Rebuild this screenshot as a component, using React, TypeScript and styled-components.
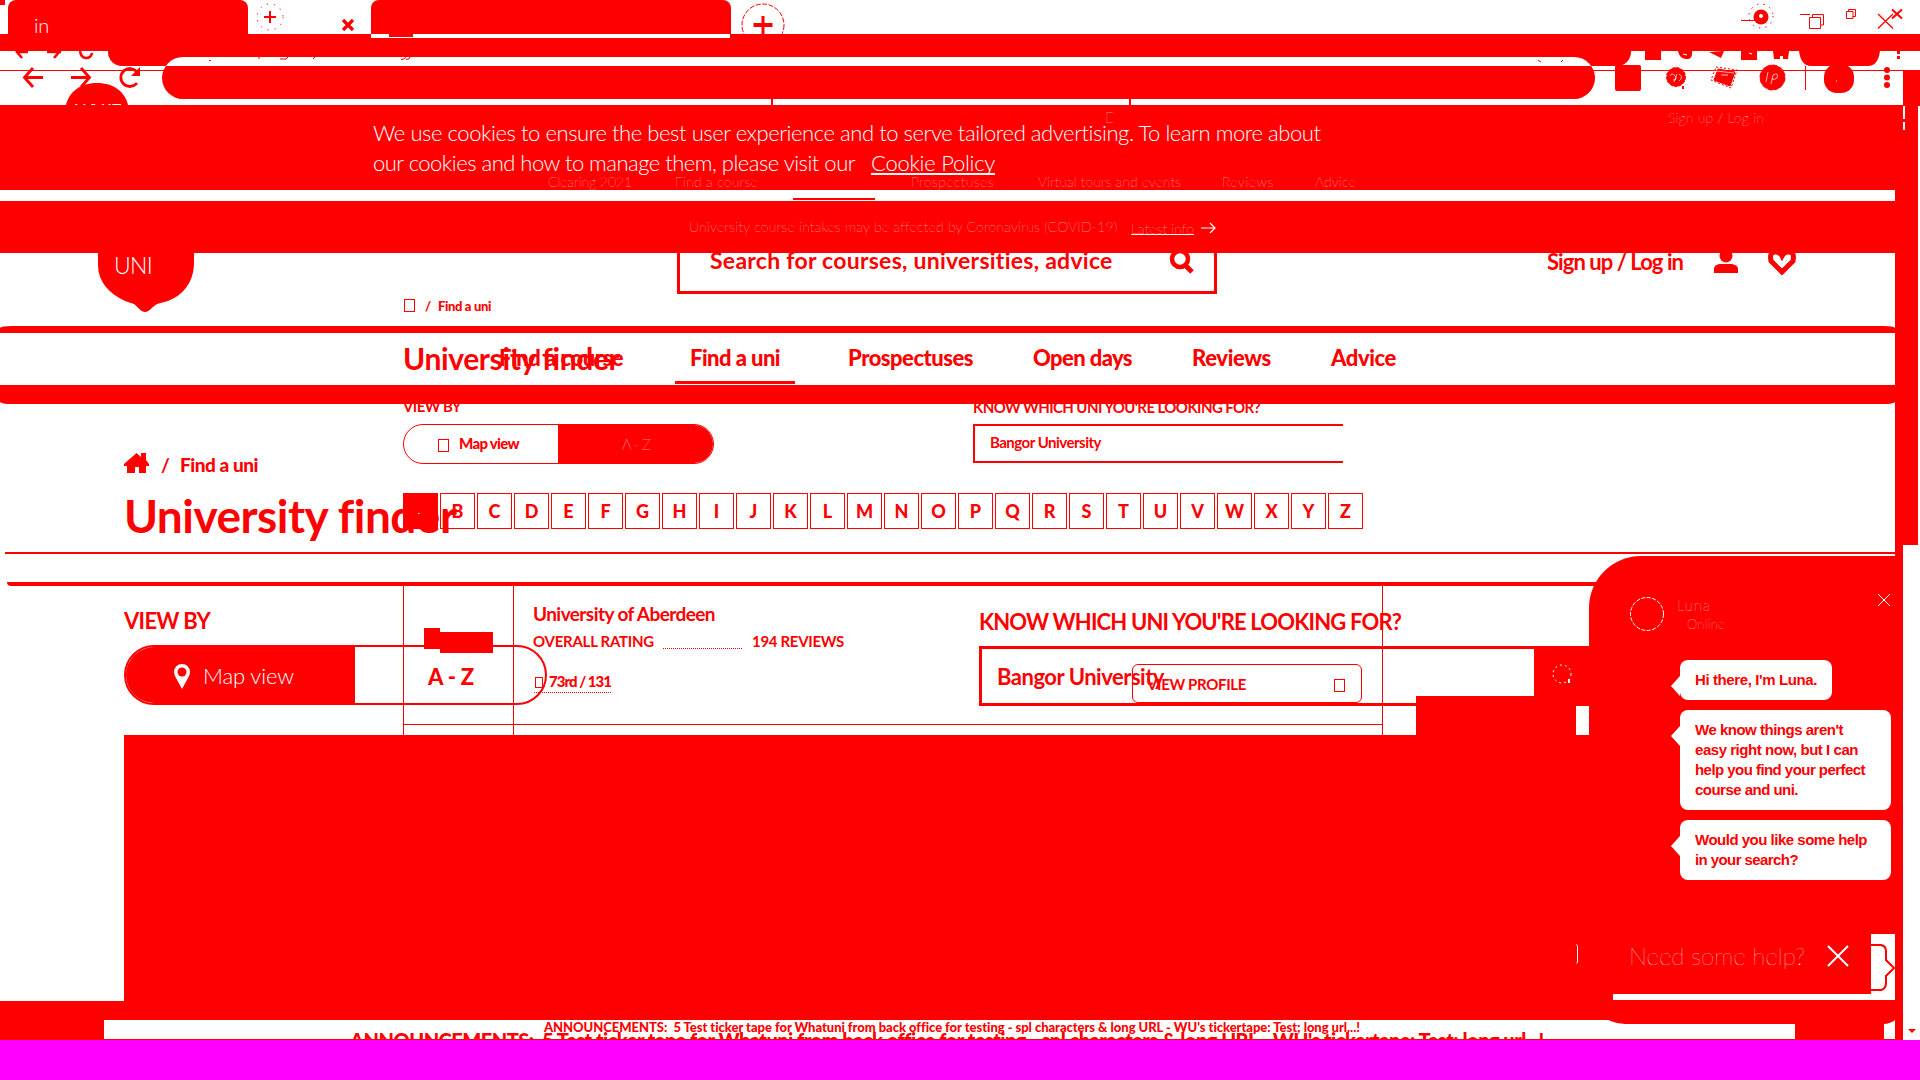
import React, { useLayoutEffect, useRef, useState } from 'react';
import styled, { createGlobalStyle, css } from 'styled-components';

const RED = '#ff0000';
const PAPER = '#ffffff';

const GlobalStyle = createGlobalStyle`
  * { box-sizing: border-box; }
  body { margin: 0; background: ${PAPER}; font-family: Lato, "Liberation Sans", sans-serif; }
`;

const Screen = styled.div`
  position: relative;
  display: flex;
  flex-direction: column;
  width: 1920px;
  height: 1080px;
  overflow: hidden;
  color: ${RED};
  background: ${PAPER};
`;

const Band = styled.section<{ $h: number; $fill?: boolean }>`
  position: relative;
  flex: none;
  height: ${p => p.$h}px;
  overflow: hidden;
  background: ${p => (p.$fill ? RED : PAPER)};
`;

/* A second sheet of content lying over the band it belongs to. */
const Sheet = styled.div`
  position: absolute;
  inset: 0;
`;

const Row = styled.div<{ $h?: number; $left?: number; $top?: number }>`
  display: flex;
  align-items: flex-start;
  height: ${p => (p.$h ? `${p.$h}px` : 'auto')};
  padding-left: ${p => p.$left ?? 0}px;
  padding-top: ${p => p.$top ?? 0}px;
`;

const Label = styled.span<{ $w: number; $size: number; $weight?: number; $pale?: boolean; $gap?: number; $drop?: number; $sans?: boolean }>`
  flex: none;
  width: ${p => p.$w}px;
  margin-left: ${p => p.$gap ?? 0}px;
  margin-top: ${p => p.$drop ?? 0}px;
  font-family: ${p => (p.$sans ? '"Liberation Sans", Arial, sans-serif' : 'Lato, "Liberation Sans", sans-serif')};
  font-size: ${p => p.$size}px;
  font-weight: ${p => p.$weight ?? 700};
  line-height: 1;
  white-space: pre;
  color: ${p => (p.$pale ? PAPER : RED)};
`;

type FitProps = { text: string; w: number; size: number; weight?: number; pale?: boolean; gap?: number; drop?: number; sans?: boolean };

/* Tracks its letters in or out so that the text fills the given width. */
function Fit({ text, w, size, weight, pale, gap, drop, sans }: FitProps) {
  const ref = useRef<HTMLSpanElement>(null);
  const [track, setTrack] = useState(0);
  useLayoutEffect(() => {
    if (ref.current) setTrack((w - ref.current.getBoundingClientRect().width) / text.length);
  }, [text, w]);
  return (
    <Label $w={w} $size={size} $weight={weight} $pale={pale} $gap={gap} $drop={drop} $sans={sans}>
      <span ref={ref} style={{ letterSpacing: track }}>{text}</span>
    </Label>
  );
}

const Block = styled.div<{ $w: number; $h: number; $gap?: number; $drop?: number; $paper?: boolean }>`
  flex: none;
  width: ${p => p.$w}px;
  height: ${p => p.$h}px;
  margin-left: ${p => p.$gap ?? 0}px;
  margin-top: ${p => p.$drop ?? 0}px;
  background: ${p => (p.$paper ? PAPER : RED)};
`;

const MissingGlyph = styled.i<{ $w?: number; $h?: number; $gap?: number; $drop?: number }>`
  flex: none;
  width: ${p => p.$w ?? 11}px;
  height: ${p => p.$h ?? 13}px;
  margin-left: ${p => p.$gap ?? 0}px;
  margin-top: ${p => p.$drop ?? 0}px;
  border: 1px solid ${RED};
`;

const Art = styled.svg<{ $gap?: number; $drop?: number }>`
  flex: none;
  display: block;
  margin-left: ${p => p.$gap ?? 0}px;
  margin-top: ${p => p.$drop ?? 0}px;
  fill: none;
  stroke: ${RED};
  overflow: visible;
`;

/* ---------- browser chrome ---------- */

const Tab = styled.div<{ $w: number; $gap: number }>`
  flex: none;
  width: ${p => p.$w}px;
  height: 34px;
  margin-left: ${p => p.$gap}px;
  padding: 15px 0 0 26px;
  background: ${RED};
  border-radius: 8px 8px 0 0;
`;

function TabStrip() {
  return (
    <Band $h={34}>
      <Row>
        <Block $w={5} $h={5} />
        <Tab $w={240} $gap={3}><Fit text="in" w={15} size={20} weight={300} pale /></Tab>
        <Art width="30" height="30" viewBox="0 0 30 30" $gap={7} $drop={2}>
          <path d="M15 9v12M9 15h12" strokeWidth="2" />
          <circle cx="15" cy="15" r="13" strokeWidth="1" strokeDasharray="1.2 6" />
        </Art>
        <Art width="12" height="12" viewBox="0 0 12 12" $gap={57} $drop={19}>
          <path d="M1 1l10 10M11 1L1 11" strokeWidth="3.2" />
        </Art>
        <Tab $w={360} $gap={17} />
        <Art width="44" height="44" viewBox="0 0 44 44" $gap={10} $drop={3}>
          <circle cx="22" cy="22" r="21" strokeWidth="1" strokeDasharray="5 1.5" />
          <path d="M22 13v20" strokeWidth="3" />
          <path d="M12.500 22h19" strokeWidth="4" />
        </Art>
      </Row>
      <WindowButtons />
    </Band>
  );
}

const Corner = styled.div`
  position: absolute;
  right: 0;
  top: 0;
`;

function WindowButtons() {
  return (
    <Corner>
      <Art width="190" height="34" viewBox="1730 0 190 34">
        <path d="M1741 20.500h14" />
        <ellipse cx="1761" cy="17" rx="7.500" ry="7.500" fill={RED} stroke="none" />
        <circle cx="1761" cy="16" r="2" fill={PAPER} stroke="none" />
        <circle cx="1761" cy="16" r="12" strokeDasharray="1.500 5" />
        <path d="M1800 14.500h10M1812.500 17v-2.500h11v10.500h-3M1809.500 17.500h11v11h-11z" />
        <path d="M1848.500 11.500v-2h7v7h-3M1846.500 11.500h6.500v7h-6.500z" />
        <path d="M1878 14l15 14.500M1893 14l-15 14.500" strokeWidth="1.300" />
        <path d="M1892 9.500l10 9M1902 9.500l-10 9" strokeWidth="2" />
      </Art>
    </Corner>
  );
}

const UpperPill = styled.div`
  flex: none;
  width: 1523px;
  height: 15px;
  margin-left: 108px;
  background: ${RED};
  border-radius: 0 0 14px 14px;
`;

const LowerPill = styled.div`
  position: absolute;
  left: 162px;
  top: 23px;
  width: 1433px;
  height: 42px;
  border-radius: 21px;
  background: linear-gradient(${PAPER} 9px, ${RED} 9px);
`;

const TabFoot = styled.div`
  position: absolute;
  left: 371px;
  top: 0;
  width: 359px;
  height: 4px;
  padding-left: 18px;
  background: ${PAPER};
`;

function AddressBar() {
  return (
    <Band $h={71}>
      <Block $w={1920} $h={17} />
      <Row><UpperPill /></Row>
      <TabFoot><Block $w={24} $h={3} /></TabFoot>
      <Sheet>
        <Art width="1920" height="71" viewBox="0 34 1920 71">
          <path d="M0 70.500h1903" />
          <path d="M16 51l6 7M16 52h12M47 52h14M60 51l-6 7" strokeWidth="2.500" />
          <path d="M80 51q1 7 6 7t6-5" strokeWidth="2.500" />
          <path d="M33 68l-8.500 9.500L33 87M25 77.500h18M81 68l8.500 9.500L81 87M71 77.500h18" strokeWidth="2.800" />
          <path d="M137 72a9 9 0 1 0 0 11" strokeWidth="2.800" />
          <path d="M140 67v9h-9z" fill={RED} stroke="none" />
          <path d="M66 105c3-13 14-22 31-22s28 9 31 22z" fill={RED} stroke="none" />
          <path d="M772 99v6M1130 99v6" strokeWidth="2" />
          <path d="M1645 51h16v9h-16zM1741 51h16v9h-16z" fill={RED} stroke="none" />
          <path d="M1678 51q1 7 8 8t6-8zM1709 52l12 6 3-7zM1773 51h16l-1 8h-5v-3h-3v3h-6z" fill={RED} stroke="none" />
          <path d="M1683 54l4 1M1749 53l3 1" stroke={PAPER} />
          <path d="M1799 51h81q-2 15-12 15h-57q-10 0-12-15z" fill={RED} stroke="none" />
          <path d="M1898.500 51v3M1898.500 56v3" strokeWidth="3" />
          <rect x="1615" y="65" width="26" height="26" rx="2" fill={RED} stroke="none" />
          <circle cx="1676" cy="77" r="9.500" fill={RED} strokeDasharray="3 1.500" />
          <path d="M1683 86v3" strokeWidth="2" />
          <path d="M1670 76q2-4 5 0t-2 4M1679 74q5 3 0 7M1674 82l3-8" stroke={PAPER} strokeWidth="0.700" />
          <path d="M1718 69l17 3-5 14-16-6z" fill={RED} />
          <path d="M1716 67l21 3-6 18-20-8z" strokeDasharray="2 2" />
          <path d="M1716 71l18 2M1721 75h7" stroke={PAPER} strokeWidth="0.700" />
          <circle cx="1772.500" cy="77.500" r="12.500" fill={RED} strokeDasharray="5 1.500" />
          <path d="M1768 72l-2 10M1771 84l2-9q6-3 4 3-2 2-5 1" stroke={PAPER} strokeWidth="0.700" />
          <path d="M1805.500 66v24" />
          <rect x="1824" y="64" width="30" height="29" rx="13" fill={RED} stroke="none" />
          <path d="M1836 81h1" stroke={PAPER} />
          <circle cx="1887" cy="70" r="3" fill={RED} stroke="none" />
          <circle cx="1887" cy="77.500" r="3" fill={RED} stroke="none" />
          <circle cx="1887" cy="85" r="3" fill={RED} stroke="none" />
        </Art>
        <LowerPill />
        <UrlRemnant />
      </Sheet>
    </Band>
  );
}

const UrlClip = styled.div`
  position: absolute;
  left: 209px;
  top: 23px;
  width: 1360px;
  height: 7px;
`;

function UrlRemnant() {
  return (
    <UrlClip>
      <Art width="1360" height="5" viewBox="0 0 1360 5">
        <path d="M0 3.500h2M50 0v2M71 2h6l2-2M106 0l-2 2M192 2.500q4 0 5-2.500M197 2.500q4 0 4-2.500M1329 3l3 2M1352 5l2-2" strokeWidth="1" />
      </Art>
    </UrlClip>
  );
}

/* ---------- banners ---------- */

const CookieLink = styled.a`
  flex: none;
  margin: 0 0 0 16px;
  width: 124px;
  height: 23px;
  border-bottom: 2px solid ${PAPER};
`;

function CookieBand() {
  return (
    <Band $h={85} $fill>
      <Row $left={373} $top={17} $h={47}>
        <Fit text="We use cookies to ensure the best user experience and to serve tailored advertising. To learn more about" w={948} size={22} weight={300} pale />
      </Row>
      <Row $left={373}>
        <Fit text="our cookies and how to manage them, please visit our" w={482} size={22} weight={300} pale />
        <CookieLink><Fit text="Cookie Policy" w={124} size={22} weight={300} pale /></CookieLink>
      </Row>
      <Sheet>
        <Row $left={1105} $top={5} $h={70}>
          <Fit text="E" w={9} size={15} weight={100} pale />
          <Fit text="Sign up / Log in" w={96} size={14} weight={100} pale gap={554} drop={1} />
        </Row>
        <Row $left={548}>
          <Fit text="Clearing 2021" w={84} size={14} weight={100} pale />
          <Fit text="Find a course" w={83} size={14} weight={100} pale gap={43} />
          <Fit text="Prospectuses" w={83} size={14} weight={100} pale gap={153} />
          <Fit text="Virtual tours and events" w={143} size={14} weight={100} pale gap={44} />
          <Fit text="Reviews" w={52} size={14} weight={100} pale gap={41} />
          <Fit text="Advice" w={41} size={14} weight={100} pale gap={41} />
        </Row>
      </Sheet>
    </Band>
  );
}

const NoticeLink = styled.a`
  flex: none;
  width: 63px;
  height: 17px;
  margin-left: 14px;
  border-bottom: 1px solid ${PAPER};
`;

function NoticeBand() {
  return (
    <Band $h={52} $fill>
      <Row $left={689} $top={17}>
        <Fit text="University course intakes may be affected by Coronavirus (COVID-19)" w={428} size={14} weight={100} pale drop={2} />
        <NoticeLink><Fit text="Latest info" w={63} size={14} weight={100} pale /></NoticeLink>
        <Art width="15" height="12" viewBox="0 0 15 12" $gap={7} $drop={4}>
          <path d="M0 6h14M9 1l5 5-5 5" stroke={PAPER} strokeWidth="1.200" />
        </Art>
      </Row>
    </Band>
  );
}

/* ---------- site header ---------- */

const SearchFrame = styled.div`
  flex: none;
  display: flex;
  width: 540px;
  height: 41px;
  margin-left: 482px;
  padding-left: 30px;
  border: solid ${RED};
  border-width: 0 3px 3px;
`;

function SiteHeader() {
  return (
    <Band $h={73}>
      <Row $left={98} $h={60}>
        <Art width="97" height="59" viewBox="0 0 97 59">
          <path d="M0 0H96V12C95 30 85 42 70 48L59 51C54 54 51 59 47 59S41 55 36 51L27 48C10 40 0 28 0 12Z" fill={RED} stroke="none" />
        </Art>
        <SearchFrame>
          <Fit text="Search for courses, universities, advice" w={403} size={23} drop={-4} />
          <Art width="24" height="25" viewBox="0 0 24 25" $gap={57} $drop={-4}>
            <circle cx="10" cy="10" r="8" strokeWidth="4.500" />
            <path d="M16 17l6 6" strokeWidth="5" />
          </Art>
        </SearchFrame>
        <Fit text="Sign up / Log in" w={136} size={22} gap={330} drop={-2} />
        <Art width="26" height="24" viewBox="0 0 26 24" $gap={30} $drop={-4}>
          <circle cx="13" cy="7" r="6.500" fill={RED} stroke="none" />
          <path d="M1 24v-5q1-3 5-4h13q5 1 6 4v5z" fill={RED} stroke="none" />
        </Art>
        <Art width="28" height="26" viewBox="0 0 28 26" $gap={29} $drop={-4}>
          <path d="M14 23L3 12Q1 2 8 3q4 0 6 4 2-4 6-4 7-1 5 9z" strokeWidth="5" />
        </Art>
      </Row>
      <Sheet>
        <Row $left={114} $top={1} $h={46}>
          <Fit text="UNI" w={38} size={23} weight={300} pale />
        </Row>
        <Row $left={404}>
          <MissingGlyph />
          <Fit text="/" w={5} size={13} weight={900} gap={10} drop={1} />
          <Fit text="Find a uni" w={53} size={13} weight={900} gap={8} drop={1} />
        </Row>
      </Sheet>
    </Band>
  );
}

const NavItems: Array<[string, number, number]> = [
  ['Find a course', 124, 0],
  ['Find a uni', 90, 67],
  ['Prospectuses', 125, 68],
  ['Open days', 99, 60],
  ['Reviews', 79, 60],
  ['Advice', 65, 60],
];

function NavBand() {
  return (
    <Band $h={52}>
      <Row $left={499} $top={14} $h={48}>
        {NavItems.map(([text, w, gap]) => <Fit key={text} text={text} w={w} size={22} weight={900} gap={gap} />)}
      </Row>
      <Row $left={675}><Block $w={120} $h={3} /></Row>
      <Sheet>
        <Row $left={403} $top={10}><Fit text="University finder" w={216} size={30} /></Row>
      </Sheet>
    </Band>
  );
}

/* ---------- finder controls ---------- */

const Toggle = styled.div<{ $big?: boolean }>`
  flex: none;
  display: flex;
  overflow: hidden;
  width: ${p => (p.$big ? 423 : 311)}px;
  height: ${p => (p.$big ? 60 : 40)}px;
  border: ${p => (p.$big ? 2 : 1)}px solid ${RED};
  border-radius: 30px;
`;

const Half = styled.div<{ $w: number; $on?: boolean; $pad: number }>`
  flex: none;
  display: flex;
  width: ${p => p.$w}px;
  padding-left: ${p => p.$pad}px;
  background: ${p => (p.$on ? RED : 'transparent')};
`;

const Field = styled.div<{ $w: number; $h: number; $edge: number; $gap: number; $pad: number }>`
  flex: none;
  display: flex;
  width: ${p => p.$w}px;
  height: ${p => p.$h}px;
  margin-left: ${p => p.$gap}px;
  padding-left: ${p => p.$pad}px;
  border: ${p => p.$edge}px solid ${RED};
  border-right: 0;
`;

const Alphabet = styled.div`
  display: flex;
  gap: 2px;
  padding: 0 0 0 403px;
`;

const Letter = styled.span<{ $on?: boolean }>`
  flex: none;
  width: 35px;
  height: 36px;
  border: 1px solid ${RED};
  text-align: center;
  font: 900 18px/34px Lato, sans-serif;
  color: ${RED};
  ${p => p.$on && css`background: ${RED}; color: ${PAPER};`}
`;

const Dash = styled.i`
  display: inline-block;
  width: 5px;
  height: 1px;
  margin-bottom: 4px;
  background: ${PAPER};
`;

function FinderBand() {
  return (
    <Band $h={148}>
      <Row $left={403} $h={20}>
        <Fit text="VIEW BY" w={58} size={15} drop={-5} />
        <Fit text="KNOW WHICH UNI YOU'RE LOOKING FOR?" w={287} size={15} gap={512} drop={-4} />
      </Row>
      <Row $left={403} $h={69}>
        <Toggle>
          <Half $w={154} $pad={34}>
            <MissingGlyph $drop={14} />
            <Fit text="Map view" w={60} size={15} weight={900} gap={10} drop={11} />
          </Half>
          <Half $w={155} $on $pad={64}><Fit text="A - Z" w={28} size={15} weight={100} pale drop={12} /></Half>
        </Toggle>
        <Field $w={370} $h={39} $edge={2} $gap={259} $pad={15}>
          <Fit text="Bangor University" w={111} size={15} drop={9} />
        </Field>
      </Row>
      <Alphabet>
        {'ABCDEFGHIJKLMNOPQRSTUVWXYZ'.split('').map(c => <Letter key={c} $on={c === 'A'}>{c === 'A' ? <Dash /> : c}</Letter>)}
      </Alphabet>
      <Sheet>
        <Row $left={124} $top={49} $h={90}>
          <Art width="25" height="20" viewBox="0 0 25 20">
            <path d="M0 11L12.500 0 17 4V0h5v7l3 4v2h-3v7h-7v-6h-4v6H3v-7H0z" fill={RED} stroke="none" />
          </Art>
          <Fit text="/" w={8} size={19} gap={12} drop={2} />
          <Fit text="Find a uni" w={78} size={19} weight={900} gap={11} drop={2} />
        </Row>
      </Sheet>
      <Sheet>
        <Row $left={124} $top={89}><Fit text="University finder" w={332} size={46} /></Row>
      </Sheet>
    </Band>
  );
}

const Rule = styled.div<{ $h: number; $left?: number; $w?: number; $tuck?: string }>`
  flex: none;
  width: ${p => p.$w ?? 1895}px;
  height: ${p => p.$h}px;
  margin-left: ${p => p.$left ?? 0}px;
  background: ${RED};
  border-radius: ${p => p.$tuck ?? '0'};
`;

/* ---------- results ---------- */

const Frame = styled.div`
  display: grid;
  grid-template-columns: 110px 869px;
  width: 980px;
  height: 149px;
  margin-left: 403px;
  border-left: 1px solid ${RED};
  border-right: 1px solid ${RED};
`;

const FrameCell = styled.div`
  position: relative;
  height: 139px;
  border-bottom: 1px solid ${RED};
  &:first-child::after {
    content: '';
    position: absolute;
    right: 0;
    top: 0;
    width: 1px;
    height: 149px;
    background: ${RED};
  }
`;

const Dotted = styled.i<{ $w: number; $gap?: number; $drop?: number }>`
  flex: none;
  width: ${p => p.$w}px;
  height: 1px;
  margin-left: ${p => p.$gap ?? 0}px;
  margin-top: ${p => p.$drop ?? 0}px;
  background: repeating-linear-gradient(90deg, ${RED} 0 1px, transparent 1px 2px);
`;

const ProfileButton = styled.div`
  position: absolute;
  left: 618px;
  top: 78px;
  display: flex;
  width: 230px;
  height: 39px;
  padding: 14px 0 0 14px;
  border: 1px solid ${RED};
  border-radius: 6px;
`;

const SearchButton = styled.div`
  flex: none;
  width: 55px;
  height: 60px;
  padding: 18px 0 0 18px;
  background: ${RED};
`;

const BigToggle = styled(Toggle)`
  background: transparent;
`;

function ResultsBand() {
  return (
    <Band $h={149}>
      <Frame>
        <FrameCell>
          <Row $left={20} $top={42}>
            <Block $w={16} $h={21} />
            <Block $w={53} $h={21} $drop={4} />
          </Row>
        </FrameCell>
        <FrameCell>
          <Row $left={19} $top={18} $h={44}><Fit text="University of Aberdeen" w={182} size={19} /></Row>
          <Row $left={19} $h={43}>
            <Fit text="OVERALL RATING" w={121} size={15} drop={4} />
            <Dotted $w={80} $gap={9} $drop={18} />
            <Fit text="194 REVIEWS" w={92} size={15} gap={9} drop={4} />
          </Row>
          <Row $left={21} $h={19}>
            <MissingGlyph $w={8} $h={11} $drop={4} />
            <Fit text="73rd / 131" w={62} size={15} weight={900} gap={6} drop={1} />
          </Row>
          <Row $left={20}><Dotted $w={78} /></Row>
          <ProfileButton>
            <Fit text="VIEW PROFILE" w={99} size={15} drop={-2} />
            <MissingGlyph $gap={88} />
          </ProfileButton>
        </FrameCell>
      </Frame>
      <Sheet>
        <Row $left={124} $top={24} $h={59}>
          <Fit text="VIEW BY" w={86} size={22} />
          <Fit text="KNOW WHICH UNI YOU'RE LOOKING FOR?" w={422} size={22} gap={769} drop={1} />
        </Row>
        <Row $left={124}>
          <BigToggle $big>
            <Half $w={229} $on $pad={48}>
              <Art width="16" height="26" viewBox="0 0 16 26" $drop={17}>
                <path d="M8 25L2 14Q0 10 0 8a8 8 0 0 1 16 0q0 3-2 6z" fill={PAPER} stroke="none" />
                <circle cx="8" cy="8" r="4.500" fill={RED} stroke="none" />
              </Art>
              <Fit text="Map view" w={91} size={22} weight={300} pale gap={13} drop={18} />
            </Half>
            <Half $w={190} $pad={73}><Fit text="A - Z" w={46} size={22} weight={900} drop={19} /></Half>
          </BigToggle>
        </Row>
      </Sheet>
      <Sheet>
        <Row $left={979} $top={60}>
          <Field $w={555} $h={60} $edge={3} $gap={0} $pad={15}>
            <Fit text="Bangor University" w={167} size={22} drop={17} />
          </Field>
          <SearchButton>
            <Art width="20" height="20" viewBox="0 0 20 20">
              <circle cx="10" cy="10" r="9" stroke={PAPER} strokeDasharray="2 3" />
              <path d="M17 15v4" stroke={PAPER} strokeWidth="2" />
            </Art>
          </SearchButton>
        </Row>
      </Sheet>
      <Sheet><Row $left={1416} $top={110}><Block $w={160} $h={39} /></Row></Sheet>
    </Band>
  );
}

function MapBand() {
  return (
    <Band $h={285} $fill>
      <Block $w={124} $h={266} $paper />
    </Band>
  );
}

const ANNOUNCEMENT = "ANNOUNCEMENTS:  5 Test ticker tape for Whatuni from back office for testing - spl characters & long URL - WU's tickertape: Test; long url...!";

const Ticker = styled(Band)`
  border-left: 104px solid ${RED};
  border-bottom: 1px solid ${RED};
`;

function TickerBand() {
  return (
    <Ticker $h={20}>
      <Row $left={440} $top={1}><Fit text={ANNOUNCEMENT} w={816} size={13} weight={900} /></Row>
      <Sheet><Row $left={246} $top={10}><Fit text={ANNOUNCEMENT} w={1194} size={20} weight={900} /></Row></Sheet>
    </Ticker>
  );
}

const Footer = styled.div`
  flex: none;
  height: 40px;
  background: #ff00ff;
`;

/* ---------- floating pieces ---------- */

const ScrollRail = styled.aside`
  position: absolute;
  right: 0;
  top: 70px;
  width: 25px;
  height: 970px;
`;

function PageScroll() {
  return (
    <ScrollRail>
      <Art width="25" height="970" viewBox="1895 70 25 970">
        <path d="M1903 70h17v36h-17z" fill={RED} stroke="none" />
        <path d="M1918 106h2v934h-2z" fill={PAPER} stroke="none" />
        <path d="M1903 106h15v439h-15zM1895 190h8v850h-8z" fill={RED} stroke="none" />
        <path d="M1903 106h2v13h-2zM1903 122h2v8h-2zM1903 545h17v495h-17z" fill={PAPER} stroke="none" />
        <path d="M1908 1029h8l-4 4z" fill={RED} stroke="none" />
      </Art>
    </ScrollRail>
  );
}

const ChatPanel = styled.aside`
  position: absolute;
  left: 1589px;
  top: 556px;
  display: flex;
  flex-direction: column;
  width: 314px;
  height: 468px;
  background: ${RED};
  border-radius: 52px 0 20px 36px;
`;

const ChatHead = styled.header`
  display: flex;
  height: 104px;
  padding: 38px 13px 0 41px;
`;

const Names = styled.div`
  display: flex;
  flex-direction: column;
  flex: 1;
  gap: 5px;
  padding: 4px 0 0 13px;
`;

const Messages = styled.div`
  display: flex;
  flex-direction: column;
  align-items: flex-start;
  gap: 10px;
  height: 274px;
  padding-left: 91px;
`;

const Bubble = styled.div<{ $w: number }>`
  position: relative;
  width: ${p => p.$w}px;
  padding: 10px 0 10px 15px;
  background: ${PAPER};
  border-radius: 8px;
  &::before {
    content: '';
    position: absolute;
    left: -9px;
    top: 16px;
    border: solid transparent;
    border-width: 10px 9px 10px 0;
    border-right-color: ${PAPER};
  }
`;

const BubbleLine = styled.div`
  display: flex;
  height: 20px;
  padding-top: 2px;
`;

const messages: Array<{ w: number; lines: Array<[string, number]> }> = [
  { w: 152, lines: [["Hi there, I'm Luna.", 122]] },
  { w: 211, lines: [["We know things aren't", 148], ['easy right now, but I can', 163], ['help you find your perfect', 170], ['course and uni.', 103]] },
  { w: 211, lines: [['Would you like some help', 172], ['in your search?', 103]] },
];

const HelpStrip = styled.footer`
  position: relative;
  display: flex;
  height: 66px;
  padding: 10px 0 0 40px;
`;

const BraceTab = styled.div`
  position: absolute;
  right: 8px;
  top: 0;
  width: 24px;
  height: 66px;
  background: ${PAPER};
`;

const StripEdge = styled.div`
  position: absolute;
  right: 8px;
  bottom: 0;
  width: 282px;
  height: 6px;
  background: ${PAPER};
`;

function Chat() {
  return (
    <ChatPanel>
      <ChatHead>
        <Art width="34" height="40" viewBox="0 0 34 40">
          <circle cx="17" cy="20" r="16.500" stroke={PAPER} strokeDasharray="4 1.500" />
        </Art>
        <Names>
          <Fit text="Luna" w={34} size={15} weight={100} pale />
          <Fit text="Online" w={38} size={13} weight={100} pale gap={10} />
        </Names>
        <Art width="12" height="12" viewBox="0 0 12 12">
          <path d="M0 0l12 12M12 0L0 12" stroke={PAPER} />
        </Art>
      </ChatHead>
      <Messages>
        {messages.map(m => (
          <Bubble key={m.lines[0][0]} $w={m.w}>
            {m.lines.map(([text, w]) => <BubbleLine key={text}><Fit text={text} w={w} size={15} sans weight={700} /></BubbleLine>)}
          </Bubble>
        ))}
      </Messages>
      <HelpStrip>
        <Fit text="Need some help?" w={176} size={24} weight={100} pale />
        <Art width="20" height="20" viewBox="0 0 20 20" $gap={23} $drop={2}>
          <path d="M0 0l20 20M20 0L0 20" stroke={PAPER} strokeWidth="2" />
        </Art>
        <BraceTab>
          <Art width="24" height="66" viewBox="0 0 24 66">
            <path d="M0 11h10q5 1 5 6v9l8 8-8 8v7q0 6-5 7H0" strokeWidth="2" />
          </Art>
        </BraceTab>
        <StripEdge />
      </HelpStrip>
    </ChatPanel>
  );
}

const EdgeMark = styled.div`
  position: absolute;
  left: 1575px;
  top: 944px;
  width: 3px;
  height: 20px;
  border-right: 1px solid ${PAPER};
  border-radius: 0 3px 3px 0;
`;

const FootBlock = styled.div`
  position: absolute;
  left: 1795px;
  top: 1020px;
  width: 89px;
  height: 20px;
  background: ${RED};
`;

const LogoWord = styled.div`
  position: absolute;
  left: 75px;
  top: 101px;
  height: 4px;
  overflow: hidden;
`;

export default function App() {
  return (
    <Screen>
      <GlobalStyle />
      <TabStrip />
      <AddressBar />
      <CookieBand />
      <Band $h={11}><Row $left={793} $top={8}><Block $w={82} $h={2} /></Row></Band>
      <NoticeBand />
      <SiteHeader />
      <Rule $h={7} $tuck="12px 12px 0 0 / 2px 2px 0 0" />
      <NavBand />
      <Rule $h={19} $tuck="0 0 12px 12px / 0 0 2px 2px" />
      <FinderBand />
      <Rule $h={2} $left={5} $w={1890} />
      <Band $h={28} />
      <Rule $h={4} $left={7} $w={1590} $tuck="0 0 0 4px" />
      <ResultsBand />
      <MapBand />
      <TickerBand />
      <Footer />
      <LogoWord><Fit text="WHAT" w={46} size={18} weight={400} pale /></LogoWord>
      <PageScroll />
      <Chat />
      <FootBlock />
      <EdgeMark />
    </Screen>
  );
}
